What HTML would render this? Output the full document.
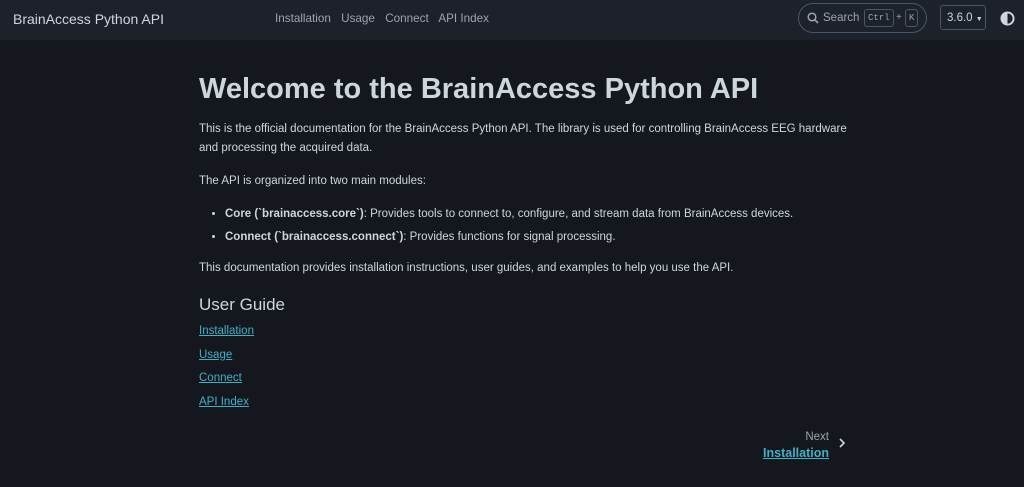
<!DOCTYPE html>
<html><head><meta charset="utf-8"><style>
*{box-sizing:border-box;margin:0;padding:0}
body{width:1024px;height:487px;overflow:hidden;background:#14181e;color:#ced6dd;font-family:"Liberation Sans",sans-serif;}
.nav{height:40px;background:#1d2129;position:relative;font-size:11.7px}
.brand{position:absolute;left:13px;top:11px;font-size:14px;color:#ced6dd}
.links{position:absolute;left:275px;top:12px;color:#9ca4af}
.links span{margin-right:7px}
.search{position:absolute;left:798px;top:3px;width:129px;height:30px;border:1px solid #48566b;border-radius:15px;color:#9ca4af;font-size:11.5px}
.search .t{position:absolute;left:24px;top:8px}
.kbd{position:absolute;top:5px;height:18px;border:1px solid #48566b;border-radius:3px;font-family:"Liberation Mono",monospace;font-size:9px;padding:3px 3px;color:#9ca4af}
.ver{position:absolute;left:940px;top:5px;width:46px;height:25px;border:1px solid #48566b;border-radius:3px;color:#ced6dd;font-size:11.5px;padding:6px 0 0 6px}
.main{position:absolute;left:199px;top:72px;width:660px;font-size:11.5px;line-height:19px}
h1{font-size:29px;font-weight:bold;line-height:34px;margin-bottom:14px;color:#ced6dd}
p{margin-bottom:14px}
ul{margin:0 0 12px 26px;list-style:disc}
li{margin-bottom:4px}
h2{font-size:17px;font-weight:normal;margin-top:16px;line-height:22px;margin-bottom:4px}
a{color:#3fb1c5;text-decoration:underline;display:block;line-height:23.7px}
.next{position:absolute;right:195px;top:429px;text-align:right;font-size:11.5px;line-height:16px}
</style></head><body>
<div class="nav">
<div class="brand">BrainAccess Python API</div>
<div class="links"><span>Installation</span> <span>Usage</span> <span>Connect</span> <span>API Index</span></div>
<div class="search"><svg style="position:absolute;left:8px;top:8px" width="12" height="12" viewBox="0 0 12 12"><circle cx="5" cy="5" r="3.8" stroke="#9ca4af" stroke-width="1.5" fill="none"/><line x1="8" y1="8" x2="11" y2="11" stroke="#9ca4af" stroke-width="1.6"/></svg><span class="t">Search</span><span class="kbd" style="left:65px">Ctrl</span><span style="position:absolute;left:97px;top:8px;font-size:10px">+</span><span class="kbd" style="left:106px">K</span></div>
<div class="ver">3.6.0 <span style="font-size:7px">▼</span></div>
<svg style="position:absolute;left:1000px;top:11px" width="15" height="15" viewBox="0 0 16 16"><circle cx="8" cy="8" r="6.5" fill="none" stroke="#ced6dd" stroke-width="2"/><path d="M8 1.5A6.5 6.5 0 0 0 8 14.5Z" fill="#ced6dd"/></svg>
</div>
<div class="main">
<h1>Welcome to the BrainAccess Python API</h1>
<p>This is the official documentation for the BrainAccess Python API. The library is used for controlling BrainAccess EEG hardware and processing the acquired data.</p>
<p>The API is organized into two main modules:</p>
<ul><li><b>Core (`brainaccess.core`)</b>: Provides tools to connect to, configure, and stream data from BrainAccess devices.</li>
<li><b>Connect (`brainaccess.connect`)</b>: Provides functions for signal processing.</li></ul>
<p>This documentation provides installation instructions, user guides, and examples to help you use the API.</p>
<h2>User Guide</h2>
<a>Installation</a><a>Usage</a><a>Connect</a><a>API Index</a>
</div>
<div class="next"><div style="color:#9ca4af">Next</div><a style="font-weight:bold;font-size:12.5px;line-height:16px">Installation</a></div>
<svg style="position:absolute;left:838px;top:437px" width="8" height="12" viewBox="0 0 8 12"><path d="M2 2l4 4-4 4" stroke="#ced6dd" stroke-width="1.6" fill="none"/></svg>
</body></html>
